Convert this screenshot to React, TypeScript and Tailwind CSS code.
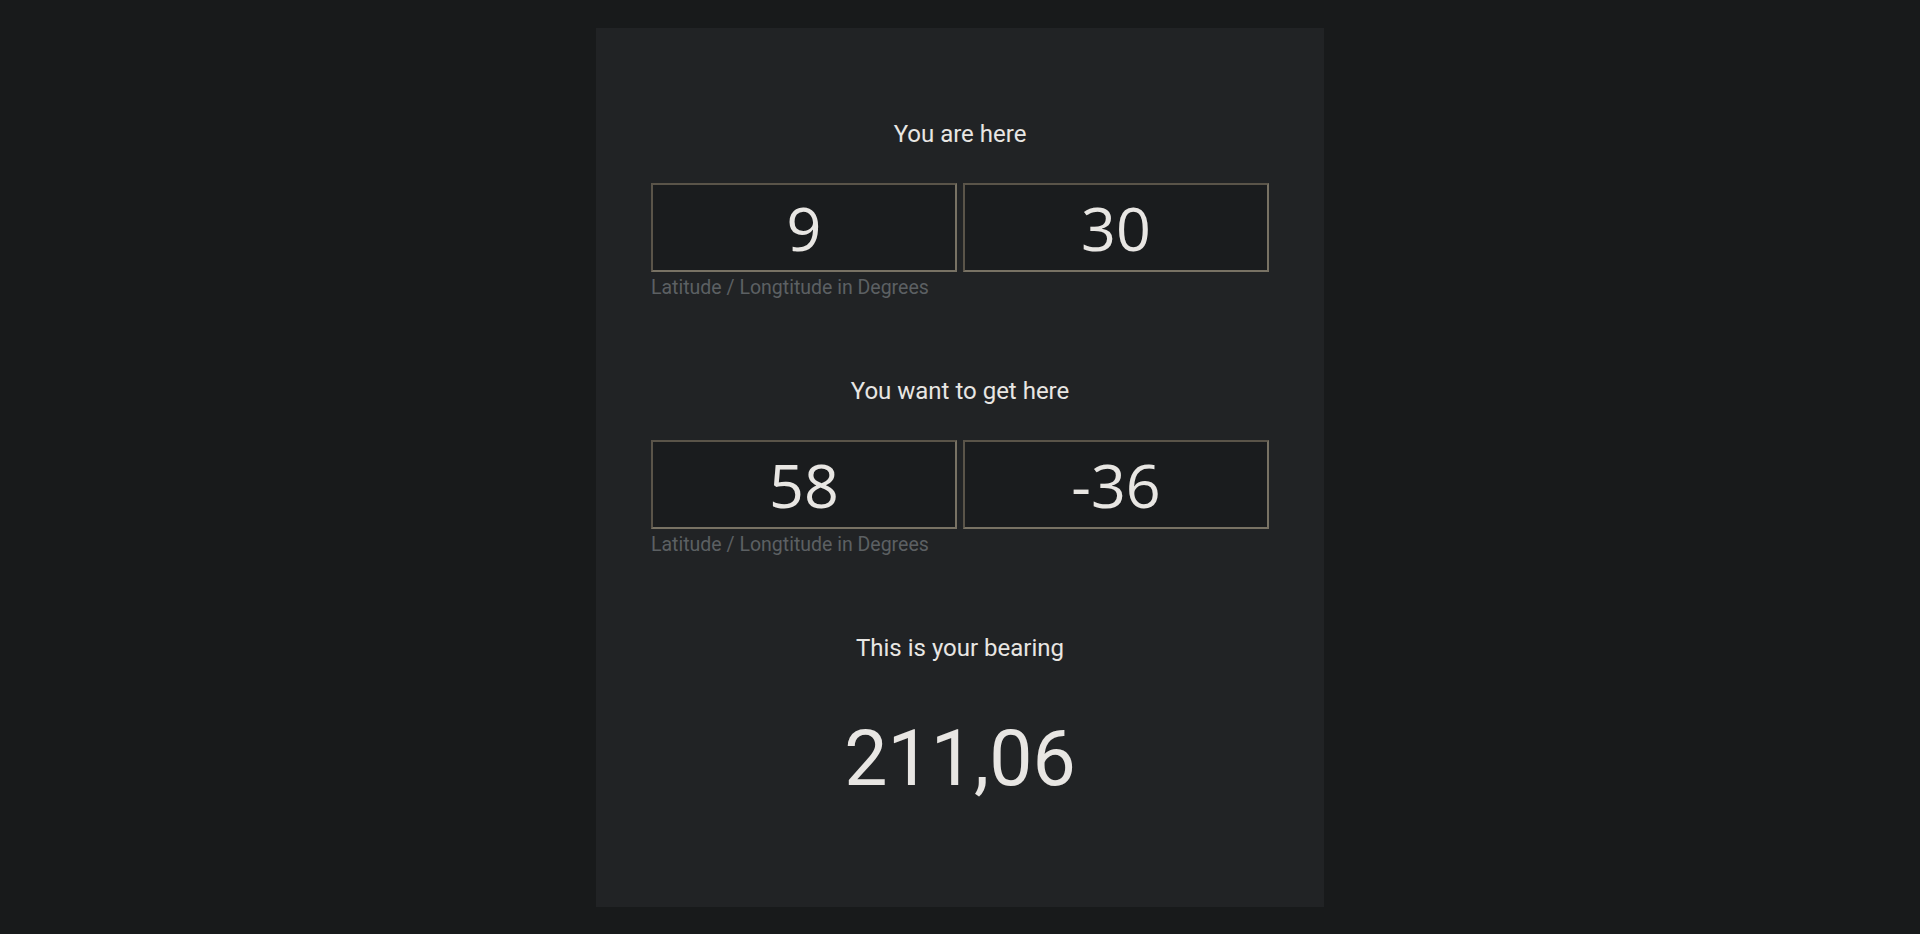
import React from "react";

function Coord({ a, b }: { a: string; b: string }) {
  const cls =
    "w-[306px] h-[89px] bg-[#1a1c1e] border-2 border-t-[#5a5449] border-l-[#5a5449] border-b-[#787264] border-r-[#787264] text-center text-[#e8e6e3] text-[61px] leading-none outline-none";
  return (
    <div className="flex flex-col">
      <div className="flex gap-[6px]">
        <input className={cls} style={{ fontFamily: '"Open Sans", sans-serif' }} defaultValue={a} />
        <input className={cls} style={{ fontFamily: '"Open Sans", sans-serif' }} defaultValue={b} />
      </div>
      <div className="mt-[4px] text-[19.5px] leading-[24px] text-[#5c6063]">Latitude / Longtitude in Degrees</div>
    </div>
  );
}

export default function App() {
  return (
    <div className="min-h-[934px] w-full bg-[#181a1b] flex justify-center pt-[28px]" style={{ fontFamily: 'Roboto, "Liberation Sans", sans-serif' }}>
      <div className="w-[728px] h-[879px] bg-[#212325] px-[55px] pt-[92px] flex flex-col">
        <div className="text-center text-[24px] leading-[28px] text-[#e8e6e3]">You are here</div>
        <div className="mt-[35px]">
          <Coord a="9" b="30" />
        </div>
        <div className="mt-[77px] text-center text-[24px] leading-[28px] text-[#e8e6e3]">You want to get here</div>
        <div className="mt-[35px]">
          <Coord a="58" b="-36" />
        </div>
        <div className="mt-[77px] text-center text-[24px] leading-[28px] text-[#e8e6e3]">This is your bearing</div>
        <div className="mt-[50px] text-center text-[77px] leading-[94px] text-[#e8e6e3]">211,06</div>
      </div>
    </div>
  );
}
